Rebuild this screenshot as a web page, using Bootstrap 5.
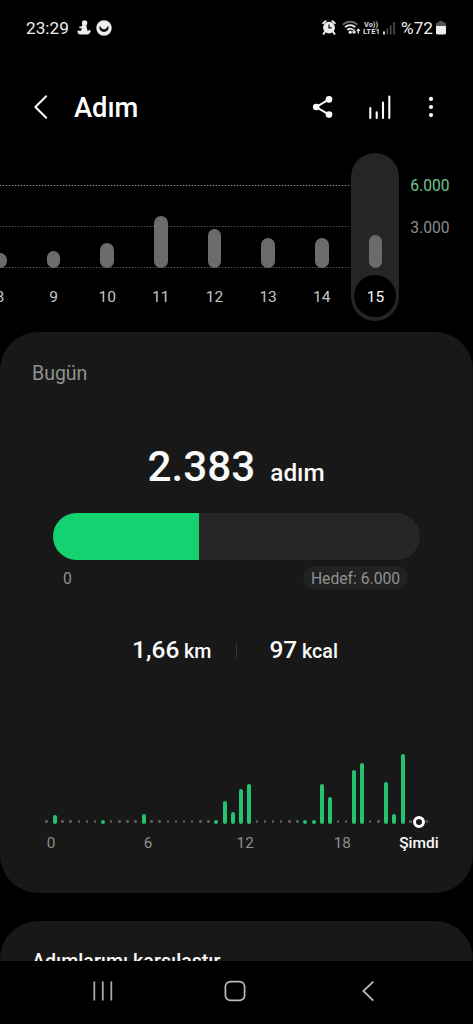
<!DOCTYPE html>
<html lang="tr" data-bs-theme="dark">
<head>
<meta charset="utf-8">
<meta name="viewport" content="width=device-width, initial-scale=1">
<title>Adım</title>
<link href="https://cdn.jsdelivr.net/npm/bootstrap@5.3.0/dist/css/bootstrap.min.css" rel="stylesheet">
<style>
  body { background: #000; color: #fafafa; font-family: Roboto, "Noto Sans", sans-serif; line-height: 1; height: 1024px; overflow: hidden; }
  svg { display: block; flex: none; }
  .status { height: 56px; padding: 0 26px; font-size: 17.2px; color: #eee; }
  .status span { padding-top: 2px; }
  .topbar { height: 97px; padding: 4px 39.5px 0 33px; }
  .topbar h1 { font-size: 27.3px; margin-left: 25px; padding-top: 3px; }
  .week { height: 179px; }
  .days { width: 429.3px; margin-left: -27px; }
  .day { width: 53.66px; height: 168px; padding-bottom: 4px; }
  .day .pill { width: 48px; height: 168px; border-radius: 24px; background: #252525; padding-bottom: 4px; }
  .stick { width: 13.5px; border-radius: 7px; background: #6b6b6b; }
  .date { width: 42px; height: 42px; margin-top: 7px; padding-top: 3px; border-radius: 50%; font-size: 15.5px; color: #c6c6c6; }
  .pill .date { background: #000; color: #fafafa; }
  .rule { left: 0; width: 351px; height: 1px; background: repeating-linear-gradient(90deg, #56564f 0 1px, #111 1px 3px); }
  .rule.goal { background: repeating-linear-gradient(90deg, #8d957f 0 1px, #1c1e18 1px 3px); }
  .scale { font-size: 15.6px; padding: 26px 0 0 8px; gap: 26px; color: #8d8d8d; }
  .scale .goal-text { color: #70c78d; }
  .panel { background: #181818; border-radius: 38px; }
  .today { height: 561px; }
  .today h2 { font-size: 19.5px; color: #919191; padding: 30px 0 0 32px; height: 114px; }
  .total { height: 66.5px; font-weight: 500; padding-right: 1px; }
  .total .num { font-size: 42.3px; margin-right: 15px; }
  .total .unit { font-size: 24.3px; }
  .goalbar { height: 47px; width: 367px; margin-left: 53px; border-radius: 24px; background: #262626; }
  .goalbar .progress-bar { background: #13d26f; }
  .limits { height: 24px; margin: 6px 65px 0 63px; font-size: 15.7px; color: #919191; }
  .limits span { padding-top: 2px; }
  .limits .target { background: #222; width: 105px; height: 23px; border-radius: 12px; }
  .stats { margin-top: 33px; height: 56px; font-weight: 500; padding-right: 3px; }
  .stats .big { font-size: 24.5px; }
  .stats .unit { font-size: 19.7px; margin-left: .7px; }
  .sep { width: 1px; height: 16px; background: #363636; }
  .hours { width: 389.2px; height: 74px; margin: 71.5px 0 0 42.4px; }
  .slot { width: 8.108px; height: 74px; }
  .slot span { width: 4px; border-radius: 2px; background: #25c16e; }
  .slot .dot { width: 2.6px; height: 2.6px; border-radius: 50%; background: #5c5c5c; margin-bottom: 1px; }
  .slot .now { width: 12px; height: 12px; flex: none; border: 3px solid #fff; border-radius: 50%; background: #181818; margin-bottom: -4px; }
  .hour-labels { width: 389px; margin-left: 51px; height: 30px; font-size: 15.3px; color: #8e8e8e; padding-top: 12px; }
  .hour-labels > span { width: 97.1px; }
  .hour-labels > span > b { font-weight: inherit; display: inline-block; transform: translateX(-50%); white-space: nowrap; }
  .hour-labels .current { width: 0; margin-left: -20.4px; color: #fafafa; font-weight: 500; font-size: 15.5px; }
  .compare { height: 40px; margin-top: 28px; border-radius: 38px 38px 0 0; overflow: hidden; padding: 31px 32px 0; font-size: 19.65px; font-weight: 500; }
  .sysnav { height: 63px; }
</style>
</head>
<body>
<div class="status d-flex align-items-center">
  <span id="clock">23:29</span>
  <svg style="margin-left:8px" width="14" height="16" viewBox="0 0 14 16" fill="#eee"><circle cx="7.6" cy="3" r="2.7"/><path d="M5.4 5 9.4 5.2 9.9 8.6Q10.9 10 10.4 11.2L12.9 9.8 13.6 10.8Q13.4 13.8 10.5 14.6H3Q0 14 .6 10.6L3.6 11 5.2 8.6 3 8.2 1.7 6.8 4.3 6.4Z"/></svg>
  <svg style="margin-left:5px" width="16" height="16" viewBox="0 0 16 16"><circle cx="8" cy="8" r="7.7" fill="#eee"/><path d="M3.2 6.6Q5 6 5.4 8 8 10.5 10.6 8 11 6 12.8 6.6 12.7 12 8 12 3.3 12 3.2 6.6Z" fill="#111"/></svg>
  <div class="d-flex align-items-center ms-auto" style="margin-right:1px">
    <svg width="14" height="15" viewBox="0 0 14 15"><circle cx="7" cy="7.6" r="5.9" fill="#eee"/><path d="M1.2 3.2 3.6 1.2M12.8 3.2 10.4 1.2M2.8 12 1.6 13.8M11.2 12 12.4 13.8" stroke="#eee" stroke-width="2" stroke-linecap="round"/><path d="M7 4.4V7.8H9.8" stroke="#111" stroke-width="1.3" fill="none"/></svg>
    <svg style="margin-left:6px" width="19" height="15" viewBox="0 0 19 15" fill="none"><path d="M.8 4.6Q8.2-1.5 15.6 4.6" stroke="#777" stroke-width="1.6"/><path d="M3 7.2Q8.2 3 13.4 7.2M5.2 9.8Q8.2 7.3 11 9.8" stroke="#eee" stroke-width="1.7"/><circle cx="8.2" cy="12.2" r="1.6" fill="#eee"/><path d="M12 8.8V13M10.4 11.5 12 13.2 13.6 11.5M16.3 13.6V9.2M14.7 10.8 16.3 9.1 17.9 10.8" stroke="#eee" stroke-width="1.2"/></svg>
    <svg style="margin-left:1px" width="19" height="16" viewBox="0 0 19 16" fill="#ddd" font-family="Roboto" font-weight="700" font-size="8"><text x="2" y="7" textLength="14" lengthAdjust="spacingAndGlyphs">Vo))</text><text x="1" y="14.3" textLength="17" lengthAdjust="spacingAndGlyphs">LTE1</text></svg>
    <svg style="margin-left:1px" width="14" height="14" viewBox="0 0 14 14"><path d="M2 10.5V13.5" stroke="#eee" stroke-width="1.8"/><path d="M5.3 7.5V13.5M8.7 4.5V13.5M12 1V13.5" stroke="#4a4a4a" stroke-width="1.7"/></svg>
    <span style="margin-left:5px">%72</span>
    <svg style="margin-left:3px" width="10" height="14" viewBox="0 0 10 14"><path d="M3 0H7V1.5H9Q10 1.5 10 3V6H0V3Q0 1.5 1 1.5H3Z" fill="#555"/><path d="M0 5H10V12Q10 13.5 8.6 13.5H1.4Q0 13.5 0 12Z" fill="#eee"/></svg>
  </div>
</div>

<header class="topbar d-flex align-items-center">
  <svg width="16" height="26" viewBox="0 0 16 26"><path d="M13.2 2.3 2.4 13 13.2 23.8" fill="none" stroke="#fafafa" stroke-width="2" stroke-linecap="round" stroke-linejoin="round"/></svg>
  <h1 class="mb-0" style="font-weight:500">Adım</h1>
  <svg class="ms-auto" width="22" height="24" viewBox="0 0 22 24"><path d="M17 4.3 4.2 12 17 19.7" fill="none" stroke="#fafafa" stroke-width="2"/><g fill="#fafafa"><circle cx="17" cy="4.4" r="3.3"/><circle cx="4.2" cy="12" r="3.3"/><circle cx="17" cy="19.6" r="3.3"/></g></svg>
  <svg style="margin-left:34px" width="24" height="26" viewBox="0 0 24 26"><path d="M2.3 14V24M8.7 18.3V24M15 8.5V24M21.3 2.5V24" stroke="#fafafa" stroke-width="2.1" stroke-linecap="round"/></svg>
  <svg style="margin-left:36px" width="6" height="24" viewBox="0 0 6 24" fill="#fafafa"><circle cx="3" cy="3.9" r="2.1"/><circle cx="3" cy="12" r="2.1"/><circle cx="3" cy="20.1" r="2.1"/></svg>
</header>

<section class="week d-flex position-relative">
  <div class="rule goal position-absolute" style="top:32px"></div>
  <div class="rule position-absolute" style="top:73px"></div>
  <div class="rule position-absolute" style="top:114px"></div>
  <div class="days d-flex flex-shrink-0 position-relative" id="days"></div>
  <div class="scale d-flex flex-column"><span class="goal-text">6.000</span><span>3.000</span></div>
</section>

<main class="panel today">
  <h2 class="mb-0 fw-normal">Bugün</h2>
  <div class="total d-flex justify-content-center align-items-baseline"><span class="num">2.383</span><span class="unit">adım</span></div>
  <div class="goalbar progress"><div class="progress-bar" style="width:39.72%"></div></div>
  <div class="limits d-flex justify-content-between align-items-center"><span>0</span><span class="target d-flex align-items-center justify-content-center">Hedef: 6.000</span></div>
  <div class="stats d-flex justify-content-center align-items-center">
    <div><span class="big">1,66</span> <span class="unit">km</span></div>
    <div class="sep" style="margin:0 32px 0 25px"></div>
    <div><span class="big">97</span> <span class="unit">kcal</span></div>
  </div>
  <div class="hours d-flex" id="hours"></div>
  <div class="hour-labels d-flex"><span><b>0</b></span><span><b>6</b></span><span><b>12</b></span><span><b>18</b></span><span class="current"><b>Şimdi</b></span></div>
</main>

<section class="panel compare">Adımlarımı karşılaştır</section>

<nav class="sysnav">
  <div class="d-flex align-items-center h-100" style="padding:0 98px 4px 92px">
    <svg width="22" height="22" viewBox="0 0 22 22"><path d="M2.3 1.5V20.5M10.8 1.5V20.5M19.3 1.5V20.5" stroke="#aaa" stroke-width="1.8"/></svg>
    <svg style="margin-left:110px" width="22" height="22" viewBox="0 0 22 22"><rect x="1.4" y="1.6" width="19.2" height="18.8" rx="5" fill="none" stroke="#bbb" stroke-width="1.7"/></svg>
    <svg class="ms-auto" width="14" height="22" viewBox="0 0 14 22"><path d="M12.3 1.6 2.4 11 12.3 20.6" fill="none" stroke="#bbb" stroke-width="1.8"/></svg>
  </div>
</nav>

<script src="https://cdn.jsdelivr.net/npm/bootstrap@5.3.0/dist/js/bootstrap.bundle.min.js"></script>
<script>
  const week = [[8, 15], [9, 17], [10, 25], [11, 52], [12, 39], [13, 30], [14, 30], [15, 33]];
  document.getElementById('days').innerHTML = week.map(([d, h]) => {
    const inner = `<div class="stick" style="height:${h}px"></div><div class="date d-flex align-items-center justify-content-center">${d}</div>`;
    const col = 'd-flex flex-column align-items-center justify-content-end';
    return d === 15
      ? `<div class="day p-0 ${col}"><div class="pill ${col}">${inner}</div></div>`
      : `<div class="day ${col}">${inner}</div>`;
  }).join('');

  // Half-hour slots: index -> bar height
  const steps = {1: 9, 7: 4.5, 12: 10.5, 21: 4.2, 22: 23, 23: 12, 24: 35, 25: 40, 32: 4.2, 33: 4.2, 34: 40, 35: 27, 38: 54, 39: 61, 42: 42, 43: 10, 44: 70};
  let out = '';
  for (let i = 0; i < 48; i++) {
    const mark = i === 46 ? '<span class="now"></span>'
      : steps[i] ? `<span style="height:${steps[i]}px"></span>` : '<span class="dot"></span>';
    out += `<div class="slot d-flex align-items-end justify-content-center">${mark}</div>`;
  }
  document.getElementById('hours').innerHTML = out;
</script>
</body>
</html>
